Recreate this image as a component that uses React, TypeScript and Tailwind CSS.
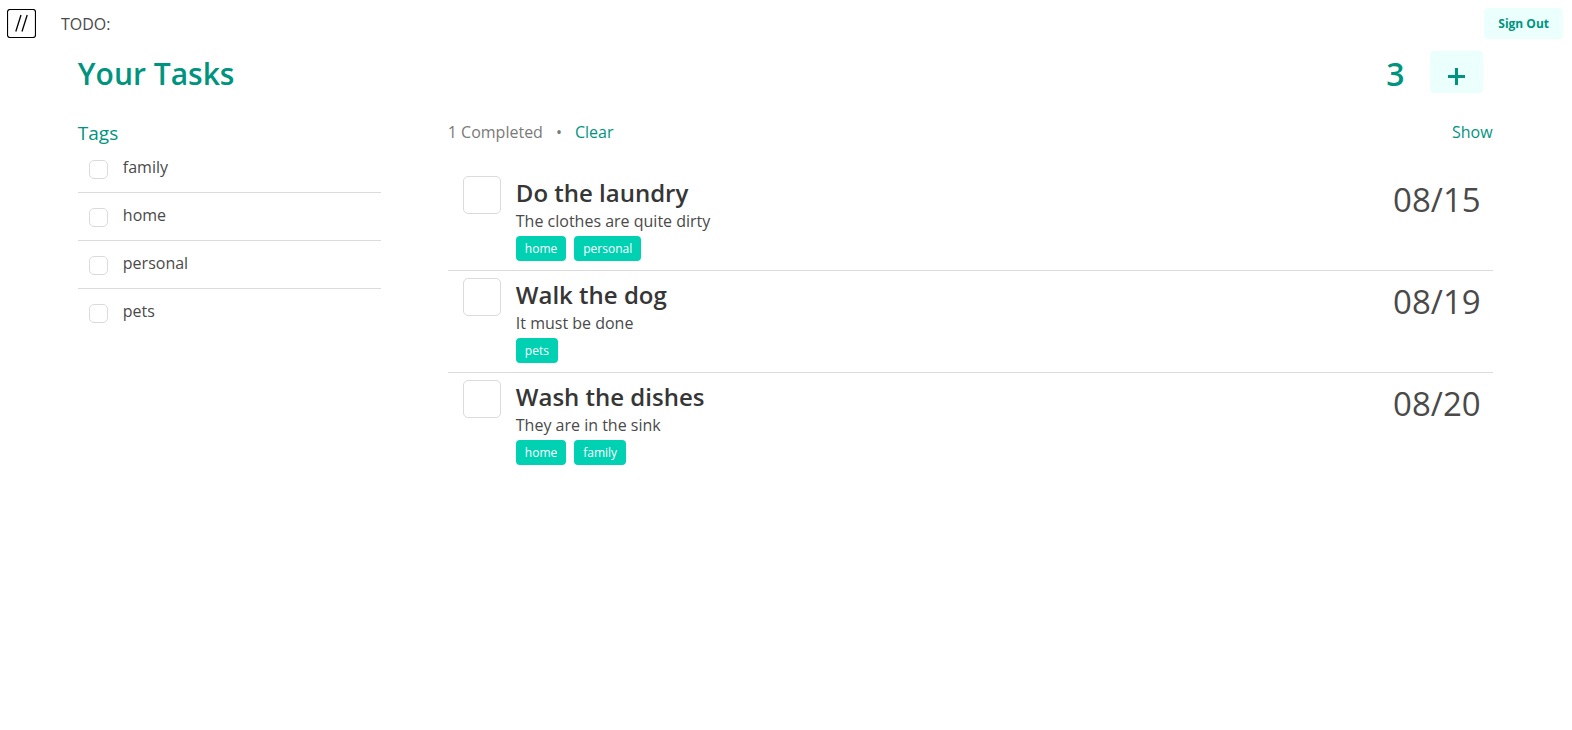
const tags = ["family", "home", "personal", "pets"];

const tasks = [
  { title: "Do the laundry", note: "The clothes are quite dirty", tags: ["home", "personal"], due: "08/15" },
  { title: "Walk the dog", note: "It must be done", tags: ["pets"], due: "08/19" },
  { title: "Wash the dishes", note: "They are in the sink", tags: ["home", "family"], due: "08/20" },
];

function Logo() {
  return (
    <svg className="size-[29px]" viewBox="0 0 29 29" fill="none" stroke="#000" aria-hidden="true">
      <rect x="0.5" y="0.5" width="28" height="28" rx="2.5" strokeWidth="1.2" />
      <path d="M14 6 8.8 22.5M20.2 6 15 22.5" strokeWidth="1.3" />
    </svg>
  );
}

function PlusIcon() {
  return (
    <svg className="size-[17px]" viewBox="0 0 17 17" fill="none" stroke="currentColor" strokeWidth="3" aria-hidden="true">
      <path d="M8.5 0V17M0 8.5H17" />
    </svg>
  );
}

function TagFilter({ name }: { name: string }) {
  return (
    <li className="flex h-12 items-start border-b border-[#dbdbdb] pt-[15px] pl-[11px] last:border-b-0">
      <input
        id={`tag-${name}`}
        type="checkbox"
        className="size-[19px] appearance-none rounded-[5px] border border-[#dbdbdb] bg-white checked:bg-[#00d1b2]"
      />
      <label htmlFor={`tag-${name}`} className="pl-[15px] leading-[14px]">
        {name}
      </label>
    </li>
  );
}

function TaskRow({ task, index }: { task: (typeof tasks)[number]; index: number }) {
  return (
    <li className="flex h-[102px] items-start border-b border-[#dbdbdb] pt-[7px] pr-3 pl-[15px] last:border-b-0">
      <input
        id={`task-${index}`}
        type="checkbox"
        className="size-[38px] shrink-0 appearance-none rounded-[5px] border border-[#dbdbdb] bg-white checked:bg-[#00d1b2]"
      />
      <div className="flex-1 pl-[15px]">
        <label htmlFor={`task-${index}`} className="block text-2xl leading-[34px] font-semibold text-[#363636]">
          {task.title}
        </label>
        <p className="leading-[22px]">{task.note}</p>
        <ul className="flex gap-2 pt-1">
          {task.tags.map((tag) => (
            <li key={tag} className="flex h-[25px] items-center rounded bg-[#00d1b2] px-[9px] pt-px text-xs text-white">
              {tag}
            </li>
          ))}
        </ul>
      </div>
      <time className="pt-[5px] text-[33px] leading-[38px]">{task.due}</time>
    </li>
  );
}

export default function App() {
  return (
    <div className="min-h-screen bg-white font-['Segoe_UI','Open_Sans',sans-serif] text-base text-[#4a4a4a]">
      <nav className="flex items-center justify-between py-2 pr-[9px] pl-[7px]">
        <div className="flex items-center gap-[25px]">
          <a href="#" aria-label="Home">
            <Logo />
          </a>
          <span>TODO:</span>
        </div>
        <button type="button" className="h-[31px] rounded-sm bg-[#ebfffc] px-3.5 pt-px text-xs font-bold text-[#00947e]">
          Sign Out
        </button>
      </nav>

      <main className="pr-[5.05%] pl-[4.95%]">
        <header className="flex items-center justify-between pt-1 pr-2.5 text-[#00947e]">
          <h1 className="pt-1 text-[30px] leading-[38px] font-semibold">Your Tasks</h1>
          <div className="flex items-center gap-[25px]">
            <span className="pt-1 text-[32px] leading-[38px] font-semibold">3</span>
            <button
              type="button"
              aria-label="Add task"
              className="flex h-[42px] w-[53px] items-center justify-center rounded bg-[#ebfffc] pt-2"
            >
              <PlusIcon />
            </button>
          </div>
        </header>

        <div className="grid grid-cols-[2.9fr_10fr] gap-[67px] pt-[26px]">
          <aside>
            <h2 className="pt-0.5 text-[19px] leading-6 text-[#00947e]">Tags</h2>
            <ul>
              {tags.map((name) => (
                <TagFilter key={name} name={name} />
              ))}
            </ul>
          </aside>

          <section>
            <div className="flex items-center justify-between leading-[26px]">
              <div className="flex gap-[13px] text-[#7a7a7a]">
                <span>1 Completed</span>
                <span>•</span>
                <button type="button" className="text-[#00947e]">
                  Clear
                </button>
              </div>
              <button type="button" className="text-[#00947e]">
                Show
              </button>
            </div>
            <ul className="pt-6">
              {tasks.map((task, index) => (
                <TaskRow key={task.title} task={task} index={index} />
              ))}
            </ul>
          </section>
        </div>
      </main>
    </div>
  );
}
